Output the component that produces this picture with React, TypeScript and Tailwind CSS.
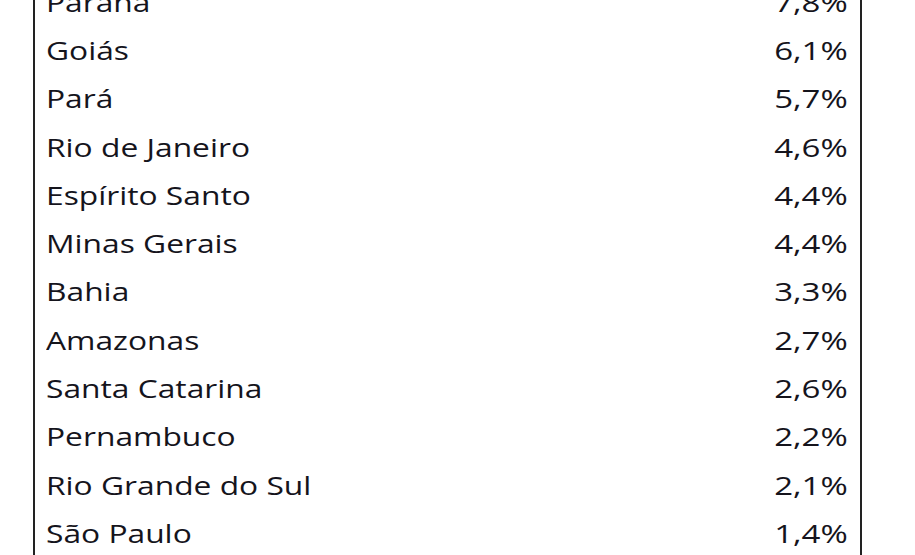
const rows: [string, string][] = [
  ['Paraná', '7,8%'],
  ['Goiás', '6,1%'],
  ['Pará', '5,7%'],
  ['Rio de Janeiro', '4,6%'],
  ['Espírito Santo', '4,4%'],
  ['Minas Gerais', '4,4%'],
  ['Bahia', '3,3%'],
  ['Amazonas', '2,7%'],
  ['Santa Catarina', '2,6%'],
  ['Pernambuco', '2,2%'],
  ['Rio Grande do Sul', '2,1%'],
  ['São Paulo', '1,4%'],
];

export default function App() {
  return (
    <div className="w-[915px] h-[555px] overflow-hidden bg-white">
      <div
        className="ml-[33px] w-[829px] -mt-[22px] border-x-2 border-[#222] text-[#15141c]"
        style={{ fontFamily: '"Open Sans", Lato, sans-serif' }}
      >
        {rows.map(([state, value]) => (
          <div key={state} className="h-[48.3px] flex items-center justify-between pl-[11px] pr-[12px] text-[25px] font-medium leading-none">
            <span className="inline-block origin-left scale-x-[1.27]">{state}</span>
            <span className="inline-block origin-right scale-x-[1.32]">{value}</span>
          </div>
        ))}
        <div className="h-[30px]" />
      </div>
    </div>
  );
}
